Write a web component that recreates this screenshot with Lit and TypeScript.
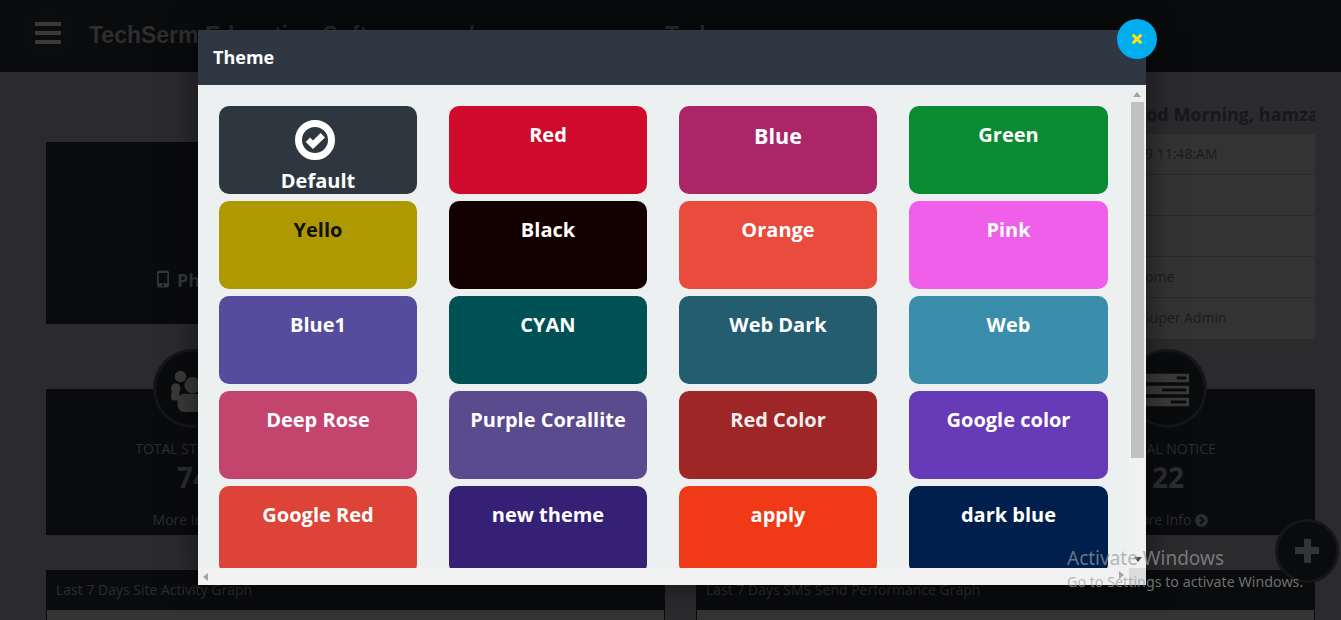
import { LitElement, html, css, svg } from "lit";
import { customElement } from "lit/decorators.js";

const themes: [string, string, string?][] = [
  ["Default", "#2e3640"], ["Red", "#cf0a2c"], ["Blue", "#ab2567"], ["Green", "#0a8a33"],
  ["Yello", "#ae9900", "#111"], ["Black", "#130000"], ["Orange", "#e94b3c"], ["Pink", "#ef5fe9"],
  ["Blue1", "#564c9d"], ["CYAN", "#005154"], ["Web Dark", "#245d70"], ["Web", "#3a8dab"],
  ["Deep Rose", "#c3446d"], ["Purple Corallite", "#5a4b8f"], ["Red Color", "#9f2626", "#eee"], ["Google color", "#673ab7"],
  ["Google Red", "#dd4437"], ["new theme", "#342176"], ["apply", "#f03a17"], ["dark blue", "#001f4d"],
];

const checkIcon = svg`<svg class="check" viewBox="0 0 40 40"><circle cx="20" cy="20" r="16.500" fill="none" stroke="#fff" stroke-width="7"/><path d="M10.700 22L15 17.500l3 3L25.500 13l4.500 4.500L18 29z" fill="#fff"/></svg>`;
const usersIcon = svg`<svg class="stat-icon" viewBox="0 0 50 50"><g fill="#3a3a3a"><circle cx="12" cy="12" r="6"/><circle cx="7" cy="24" r="5"/><circle cx="24.500" cy="21" r="8.500"/><path d="M3 27h8v10H6a4 4 0 0 1-4-4z"/><rect x="9" y="30" width="32" height="19" rx="7"/><circle cx="37" cy="12" r="6"/><circle cx="42" cy="24" r="5"/></g></svg>`;
const listIcon = svg`<svg class="stat-icon" viewBox="0 0 50 50"><g fill="#3a3a3a"><path d="M0 9h47v9H0zM0 21.500h47v9H0zM0 34h47v9H0z"/></g><g fill="#0a0b0d"><rect x="34" y="12" width="10" height="3"/><rect x="19" y="24.500" width="25" height="3"/><rect x="28" y="37" width="16" height="3"/></g></svg>`;
const phoneIcon = svg`<svg class="phone" viewBox="0 0 14 20"><path fill="#33373b" d="M2.500 0h9A2.500 2.500 0 0 1 14 2.500v15a2.500 2.500 0 0 1-2.500 2.500h-9A2.500 2.500 0 0 1 0 17.500v-15A2.500 2.500 0 0 1 2.500 0zM2 3v12h10V3zm5 13.200a1.300 1.300 0 1 0 0 2.600 1.300 1.300 0 0 0 0-2.600z"/></svg>`;
const closeIcon = svg`<svg class="x" viewBox="0 0 10 10"><path d="M1.700 1.700l6.600 6.600M8.300 1.700L1.700 8.300" stroke="#ffe500" stroke-width="3" stroke-linecap="square" fill="none"/></svg>`;
const arrowIcon = svg`<svg class="arrow" viewBox="0 0 14 14"><circle cx="7" cy="7" r="7" fill="#2c2d2f"/><path d="M5.500 3.500L9 7l-3.500 3.500" stroke="#0a0b0d" stroke-width="2.200" fill="none"/></svg>`;

@customElement("app-root")
export class AppRoot extends LitElement {
  static styles = css`
    :host { display: block; position: relative; height: 620px; overflow: hidden; background: #2b2b2d; font-family: "Open Sans", sans-serif; }
    .topbar { height: 72px; background: #0a0b0d; display: flex; align-items: center; gap: 14px; padding-left: 24px; box-sizing: border-box; }
    .burger { width: 54px; height: 54px; margin-top: -7px; border-radius: 50%; background: #0b0c0e; display: flex; flex-direction: column; justify-content: center; align-items: center; gap: 5px; margin-left: -3px; box-sizing: border-box; }
    .burger i { width: 26px; height: 4px; background: #3a3a3a; display: block; }
    .brand { font: bold 23px "Liberation Sans", sans-serif; color: #2e2e2e; margin-top: -2px; white-space: nowrap; display: flex; }
    .brand .sep { margin-left: 48px; }
    .brand .today { margin-left: 191px; }
    .page { padding: 22px 26px 0 46px; box-sizing: border-box; }
    .row1 { display: flex; gap: 20px; height: 272px; }
    .profile { flex: 1; margin-top: 48px; height: 182px; background: #0a0b0d; display: flex; align-items: flex-end; padding: 0 0 31px 111px; box-sizing: border-box; gap: 8px; }
    .phone { width: 12px; height: 18px; margin-bottom: 5px; }
    .profile b { font-size: 18px; line-height: 26px; color: #33373b; }
    .side { width: 315px; overflow: hidden; }
    .hello { margin: 8px 0 7px; padding-left: 122px; font-size: 18px; line-height: 25px; font-weight: 700; color: #17181a; white-space: nowrap; }
    .info { background: #333334; }
    .info div { height: 41px; box-sizing: border-box; border-bottom: 1px solid #2a2a2b; font-size: 14px; line-height: 40px; color: #1b1c1e; }
    .info div:last-child { border-bottom: 0; }
    .info .d { padding-left: 80px; }
    .info .h { padding-left: 114px; }
    .info .s { padding-left: 142px; }
    .stats { display: grid; grid-template-columns: repeat(4, 294px); column-gap: 31px; margin-top: 23px; height: 181px; }
    .stat { position: relative; background: #0a0b0d; height: 146px; text-align: center; display: flex; flex-direction: column; align-items: center; padding-top: 51px; box-sizing: border-box; color: #2c2d2f; }
    .circle { position: absolute; top: -40px; left: 107px; width: 79px; height: 79px; box-sizing: border-box; border: 3px solid #151618; border-radius: 50%; background: #0a0b0d; display: flex; align-items: center; justify-content: center; }
    .stat-icon { width: 48px; height: 48px; }
    .stat .label { font-size: 14px; line-height: 18px; }
    .stat .num { font-size: 28px; line-height: 38px; font-weight: 700; }
    .stat .more { font-size: 14px; line-height: 20px; margin-top: 14px; display: flex; align-items: center; gap: 4px; }
    .arrow { width: 13px; height: 13px; }
    .graphs { display: grid; grid-template-columns: 619px 619px; column-gap: 31px; }
    .graph { border: 1px solid #0a0b0d; border-top: 0; background: #343435; height: 100px; }
    .graph header { height: 40px; background: #0a0b0d; color: #2c2d2f; font-size: 14px; line-height: 40px; padding-left: 9px; }

    .modal { position: absolute; left: 198px; top: 30px; width: 948px; height: 555px; display: flex; flex-direction: column; box-shadow: 0 0 30px rgba(0,0,0,.55); background: #ecf0f1; }
    .head { height: 55px; background: #2f3742; flex: none; color: #fff; font-size: 18px; font-weight: 700; line-height: 55px; padding-left: 15px; }
    .mid { flex: 1; min-height: 0; display: flex; }
    .grid { flex: 1; overflow: hidden; display: grid; grid-template-columns: repeat(3, 198px) 199px; column-gap: 32px; row-gap: 7px; grid-auto-rows: 88px; padding: 21px 0 0 21px; align-content: start; }
    .tile { border-radius: 10px; color: #fff; font-size: 20px; font-weight: 700; line-height: 28px; text-align: center; padding-top: 15px; box-sizing: border-box; white-space: nowrap; }
    .tile.def { display: flex; flex-direction: column; align-items: center; padding-top: 14px; line-height: 26px; gap: 8px; }
    .tile.big { font-size: 21.500px; padding-top: 16px; }
    .check { width: 40px; height: 40px; margin-left: -6px; flex: none; }
    .vbar { width: 17px; flex: none; display: flex; flex-direction: column; align-items: center; background: linear-gradient(#ecf0f1 0 16px, #f1f1f1 380px); padding: 7px 2px 0 2px; box-sizing: border-box; }
    .up { width: 0; height: 0; border: 4px solid transparent; border-top: 0; border-bottom: 5px solid #a3a3a3; margin-left: -1px; }
    .thumb { width: 13px; height: 356px; background: #c1c1c1; margin-top: 5px; }
    .down { width: 0; height: 0; border: 4px solid transparent; border-bottom: 0; border-top: 5px solid #505050; margin-top: auto; margin-bottom: 6px; }
    .hbar { height: 17px; flex: none; background: #f1f1f1; display: flex; align-items: center; padding-left: 5px; }
    .left { width: 0; height: 0; border: 4px solid transparent; border-left: 0; border-right: 5px solid #a3a3a3; }
    .right { width: 0; height: 0; border: 4px solid transparent; border-right: 0; border-left: 5px solid #a3a3a3; margin: -4px 5px 0 auto; }
    .corner { width: 17px; height: 17px; background: #dcdcdc; }
    .close { position: absolute; left: 1117px; top: 19px; width: 40px; height: 40px; border-radius: 50%; background: #00aeef; display: flex; align-items: center; justify-content: center; }
    .x { width: 10px; height: 10px; margin-left: -1px; }
    .fab { position: absolute; left: 1275px; top: 519px; width: 64px; height: 64px; box-sizing: border-box; border: 3px solid #151618; border-radius: 50%; background: #0a0b0d; }
    .fab::before { content: ""; position: absolute; left: 17px; top: 25px; width: 24px; height: 7px; background: #333436; }
    .fab::after { content: ""; position: absolute; left: 25.500px; top: 16.500px; width: 7px; height: 24px; background: #333436; }
    .wm { position: absolute; left: 1067px; top: 545px; color: rgba(155,155,155,.71); font-family: "Noto Sans", sans-serif; white-space: nowrap; pointer-events: none; }
    .wm .a { font-size: 19px; line-height: 26px; }
    .wm .b { font-size: 14.270px; line-height: 19px; margin-top: 1px; }
  `;

  render() {
    return html`
      <div class="topbar">
        <div class="burger"><i></i><i></i><i></i></div>
        <div class="brand"><span>TechSerm Education Software</span><span class="sep">/</span><span class="today">Today</span></div>
      </div>
      <div class="page">
        <div class="row1">
          <div class="profile">${phoneIcon}<b>Phone</b></div>
          <div class="side">
            <div class="hello">Good Morning, hamza</div>
            <div class="info">
              <div class="d">12-08-2019 11:48:AM</div>
              <div></div>
              <div></div>
              <div class="h">Welcome</div>
              <div class="s">Super Admin</div>
            </div>
          </div>
        </div>
        <div class="stats">
          <div class="stat"><div class="circle">${usersIcon}</div><div class="label">TOTAL STUDENTS</div><div class="num">74</div><div class="more">More Info ${arrowIcon}</div></div>
          <div class="stat"><div class="circle"></div><div class="label">TOTAL TEACHER</div><div class="num">12</div><div class="more">More Info ${arrowIcon}</div></div>
          <div class="stat"><div class="circle"></div><div class="label">TOTAL STAFF</div><div class="num">8</div><div class="more">More Info ${arrowIcon}</div></div>
          <div class="stat"><div class="circle">${listIcon}</div><div class="label">TOTAL NOTICE</div><div class="num">22</div><div class="more">More Info ${arrowIcon}</div></div>
        </div>
        <div class="graphs">
          <div class="graph"><header>Last 7 Days Site Activity Graph</header></div>
          <div class="graph"><header>Last 7 Days SMS Send Performance Graph</header></div>
        </div>
      </div>

      <div class="modal">
        <div class="head">Theme</div>
        <div class="mid">
          <div class="grid">
            ${themes.map(([n, c, fg], i) => html`
              <div class="tile ${i === 0 ? "def" : ""} ${n === "Blue" ? "big" : ""}" style="background:${c};${fg ? `color:${fg}` : ""}">
                ${i === 0 ? checkIcon : ""}${n}
              </div>`)}
          </div>
          <div class="vbar"><div class="up"></div><div class="thumb"></div><div class="down"></div></div>
        </div>
        <div class="hbar"><div class="left"></div><div class="right"></div><div class="corner"></div></div>
      </div>
      <div class="close">${closeIcon}</div>
      <div class="fab"></div>
      <div class="wm"><div class="a">Activate Windows</div><div class="b">Go to Settings to activate Windows.</div></div>
    `;
  }
}
